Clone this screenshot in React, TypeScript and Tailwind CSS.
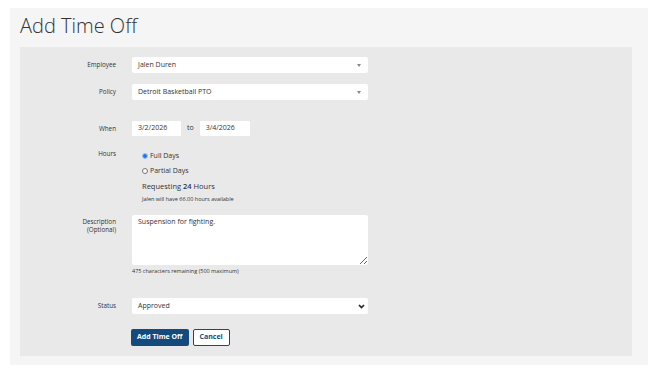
const font = { fontFamily: "'Open Sans', 'Liberation Sans', sans-serif" };

function Caret() {
  return (
    <svg width="4" height="3" viewBox="0 0 4 3" className="mr-[7px]">
      <path d="M0 0 L4 0 L2 3 Z" fill="#888" />
    </svg>
  );
}

function Chevron() {
  return (
    <svg width="7" height="5" viewBox="0 0 7 5" className="mr-[3px]">
      <path d="M1 1 L3.5 3.6 L6 1" stroke="#222" strokeWidth="1.6" fill="none" />
    </svg>
  );
}

function Row({ label, children, className = "" }: { label: React.ReactNode; children: React.ReactNode; className?: string }) {
  return (
    <div className={`flex items-start gap-[16px] ${className}`}>
      <div className="w-[96px] shrink-0 text-right text-[6.3px] leading-[16px] text-[#333]">{label}</div>
      <div className="flex-1">{children}</div>
    </div>
  );
}

function FakeSelect({ value, chevron }: { value: string; chevron?: boolean }) {
  return (
    <div className="flex h-[16px] w-[236px] items-center justify-between rounded-[2px] bg-white text-[7px] text-[#333]">
      <span className="pl-[6px]">{value}</span>
      {chevron ? <Chevron /> : <Caret />}
    </div>
  );
}

export default function App() {
  return (
    <div className="h-[374px] w-[648px] bg-white pl-[10px] pt-[8px]" style={font}>
      <div className="h-[357px] bg-[#f5f5f5] pl-[10px] pr-[16px]">
        <h1 className="pt-[3px] text-[20px] font-light leading-[30px] text-[#333]">Add Time Off</h1>
        <div className="mt-[6px] h-[309px] bg-[#e9e9e9] pt-[10px]">
          <Row label="Employee">
            <FakeSelect value="Jalen Duren" />
          </Row>
          <Row label="Policy" className="mt-[11px]">
            <FakeSelect value="Detroit Basketball PTO" />
          </Row>
          <Row label="When" className="mt-[21px]">
            <div className="flex items-center text-[7px] text-[#333]">
              <div className="flex h-[15px] w-[49px] items-center rounded-[1px] bg-white pl-[6px]">3/2/2026</div>
              <span className="mx-[6px]">to</span>
              <div className="flex h-[15px] w-[50px] items-center rounded-[1px] bg-white pl-[6px]">3/4/2026</div>
            </div>
          </Row>
          <Row label={<div className="leading-[8px]">Hours</div>} className="mt-[13px]">
            <div className="pl-[10px] text-[7px] text-[#333]">
              <label className="flex h-[12px] items-center gap-[2px]">
                <span className="flex h-[6px] w-[6px] items-center justify-center rounded-full border border-[#8ab4f8] bg-white">
                  <span className="h-[4px] w-[4px] rounded-full bg-[#1a73e8]" />
                </span>
                Full Days
              </label>
              <label className="mt-[3px] flex h-[12px] items-center gap-[2px]">
                <span className="h-[6px] w-[6px] rounded-full border border-[#777] bg-white" />
                Partial Days
              </label>
              <div className="mt-[3px] text-[7.5px] leading-[12px]">
                Requesting <b className="font-semibold">24</b> Hours
              </div>
              <div className="text-[5.5px] leading-[14px]">Jalen will have 66.00 hours available</div>
            </div>
          </Row>
          <Row
            label={
              <div className="pt-[3px] leading-[8px]">
                Description
                <br />
                (Optional)
              </div>
            }
            className="mt-[9px]"
          >
            <textarea
              readOnly
              defaultValue="Suspension for fighting."
              className="block h-[50px] w-[236px] resize-y rounded-[2px] bg-white px-[6px] py-[2px] text-[7px] text-[#333] outline-none"
              style={font}
            />
            <div className="mt-[1px] text-[5.5px] leading-[10px] text-[#333]">475 characters remaining (500 maximum)</div>
          </Row>
          <Row label="Status" className="mt-[22px]">
            <FakeSelect value="Approved" chevron />
          </Row>
          <div className="ml-[111px] mt-[15px] flex gap-[4px]">
            <button className="h-[17px] rounded-[2px] bg-[#144a7c] px-[6px] text-[7px] font-bold text-white">Add Time Off</button>
            <button className="h-[17px] rounded-[2px] border border-[#144a7c] bg-white px-[6px] text-[7px] font-bold text-[#144a7c]">Cancel</button>
          </div>
        </div>
      </div>
    </div>
  );
}
